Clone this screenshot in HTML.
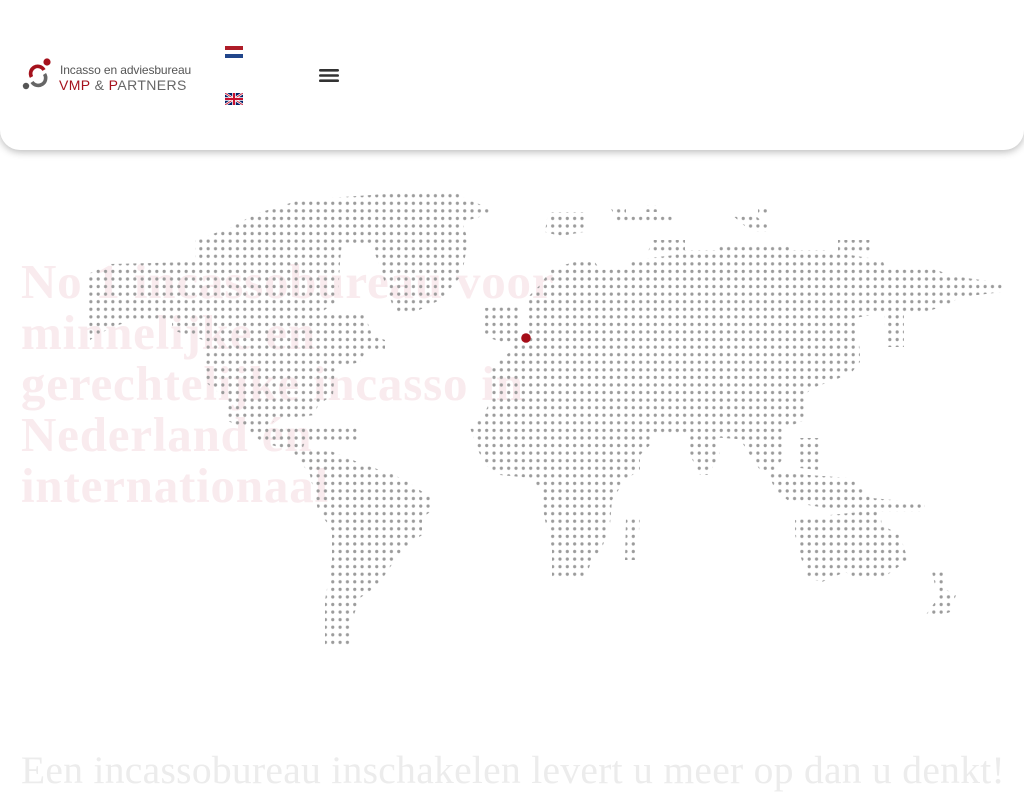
<!DOCTYPE html>
<html><head><meta charset="utf-8">
<style>
html,body{margin:0;padding:0}
body{width:1024px;height:768px;overflow:hidden;background:#fff;position:relative;font-family:"Liberation Sans",sans-serif}
.hdr{position:absolute;left:0;top:0;width:1024px;height:150px;background:#fff;border-radius:0 0 20px 20px;box-shadow:0 2px 8px rgba(0,0,0,.28);z-index:5}
.t1{position:absolute;left:60px;top:63px;font-size:12px;color:#555;letter-spacing:-.1px}
.t2{position:absolute;left:59px;top:77px;font-size:14px;color:#666;letter-spacing:.4px}
.t2 b{font-weight:normal;color:#a5111c}
.title{position:absolute;left:21px;top:256px;width:620px;font-family:"Liberation Serif",serif;font-weight:bold;font-size:49px;line-height:51px;letter-spacing:.8px;color:#f9ebee;margin:0;white-space:nowrap}
.sub{position:absolute;left:21px;top:747px;font-family:"Liberation Serif",serif;font-size:39.5px;color:#ececec;white-space:nowrap;letter-spacing:.3px}
svg.map{position:absolute;left:0;top:0}
</style></head><body>
<div class="sub">Een incassobureau inschakelen levert u meer op dan u denkt!</div>
<p class="title">No 1 incassobureau voor<br>minnelijke en<br>gerechtelijke incasso in<br>Nederland én<br>internationaal</p>
<svg class="map" width="1024" height="768">
<defs>
<pattern id="dots" patternUnits="userSpaceOnUse" x="461.035" y="199.515" width="7.33" height="7.57">
<circle cx="3.665" cy="3.785" r="1.6" fill="#9b9b9b"/>
</pattern>
<clipPath id="land">
<polygon points="88,274 110,264 195,262 195,240 230,228 255,214 300,200 415,192 455,192 468,200 490,208 490,214 462,222 468,240 462,275 440,300 413,313 395,313 378,262 372,245 342,242 340,262 338,300 322,312 365,315 372,335 385,340 385,352 365,352 360,362 335,368 333,395 318,405 315,415 275,420 268,427 358,427 358,442 305,442 302,450 288,450 262,442 245,428 225,420 225,398 203,380 203,340 172,330 172,320 133,320 110,328 90,340 88,300"/>
<polygon points="292,450 328,450 365,465 392,474 408,482 430,497 430,512 422,518 422,535 408,545 395,560 378,585 360,598 352,620 352,646 325,646 325,600 332,560 332,530 318,510 310,475"/>
<polygon points="470,428 478,420 485,412 492,398 492,368 500,360 510,352 512,345 530,330 525,300 540,285 552,268 575,262 595,262 600,270 628,268 632,260 675,255 678,250 825,250 850,255 882,260 885,266 932,268 952,276 1003,283 1003,292 960,297 948,305 925,312 888,312 855,318 860,350 860,362 852,372 835,380 812,388 805,395 805,420 785,428 780,442 770,455 750,440 655,433 472,433"/>
<polygon points="484,308 518,306 518,348 484,336"/>
<polygon points="472,433 530,428 655,433 650,445 640,455 640,470 625,480 612,500 610,525 603,545 590,565 585,580 552,580 552,548 545,520 540,490 532,478 500,475 485,465 478,450"/>
<polygon points="688,436 718,436 720,455 708,475 700,475 690,455"/>
<polygon points="738,436 782,436 785,455 775,470 760,470 750,455"/>
<polygon points="798,438 822,438 818,470 800,468"/>
<polygon points="768,472 850,478 872,498 925,503 925,512 850,512 790,502 775,490"/>
<polygon points="795,520 830,515 860,512 880,512 882,525 900,535 908,560 880,580 860,580 845,572 822,582 808,578 800,555 795,535"/>
<polygon points="932,572 945,572 943,588 956,595 950,612 940,616 925,616 938,598"/>
<polygon points="626,518 640,518 637,560 625,560"/>
<polygon points="884,312 904,312 904,347 885,347"/>
<polygon points="548,212 584,212 584,232 560,236 545,232"/>
<polygon points="610,207 626,207 626,215 672,215 675,222 618,222"/>
<polygon points="645,205 660,205 660,212 645,212"/>
<polygon points="652,240 685,240 685,252 648,252"/>
<polygon points="730,213 752,213 768,226 768,232 752,232 740,222"/>
<polygon points="718,246 788,243 790,252 718,254"/>
<polygon points="838,240 872,240 872,254 838,254"/>
<polygon points="758,206 770,206 770,214 758,214"/>
</clipPath>
</defs>
<rect x="80" y="185" width="930" height="470" fill="url(#dots)" clip-path="url(#land)"/>
<circle cx="526" cy="338" r="4.8" fill="#a50d18"/>
</svg>
<div class="hdr">
<svg width="60" height="100" style="position:absolute;left:0;top:40px">
<circle cx="47" cy="22" r="3.6" fill="#a5111c"/>
<circle cx="26" cy="46" r="3.2" fill="#555"/>
<path d="M31.5,37 A7,7 0 0 1 44,30" stroke="#a5111c" stroke-width="3.6" fill="none"/>
<path d="M44.5,34 A7,7 0 0 1 32,42" stroke="#666" stroke-width="3.6" fill="none"/>
</svg>
<div class="t1">Incasso en adviesbureau</div>
<div class="t2"><b>VMP</b> &amp; <b>P</b>ARTNERS</div>
<svg width="18" height="12" style="position:absolute;left:225px;top:46px"><rect width="18" height="4" fill="#ae1c28"/><rect y="4" width="18" height="4" fill="#fff"/><rect y="8" width="18" height="4" fill="#21468b"/></svg>
<svg width="18" height="12" viewBox="0 0 60 40" style="position:absolute;left:225px;top:93px"><rect width="60" height="40" fill="#012169"/><path d="M0,0 60,40M60,0 0,40" stroke="#fff" stroke-width="8"/><path d="M0,0 60,40M60,0 0,40" stroke="#c8102e" stroke-width="3"/><path d="M30,0V40M0,20H60" stroke="#fff" stroke-width="12"/><path d="M30,0V40M0,20H60" stroke="#c8102e" stroke-width="7"/></svg>
<svg width="21" height="14" style="position:absolute;left:319px;top:69px"><rect y="0" width="20" height="2.6" rx="1.3" fill="#333"/><rect y="5.2" width="20" height="2.6" rx="1.3" fill="#333"/><rect y="10.4" width="20" height="2.6" rx="1.3" fill="#333"/></svg>
</div>
</body></html>
